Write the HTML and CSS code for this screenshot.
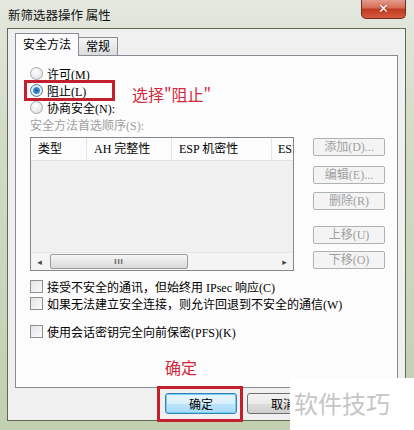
FILE: index.html
```html
<!DOCTYPE html>
<html lang="zh-CN">
<head>
    <meta charset="UTF-8">
    <title>新筛选器操作 属性</title>
    <link rel="stylesheet" href="styles.css">
</head>
<body>
    <div class="window">
        <div class="titlebar">
            <span class="title">新筛选器操作 属性</span>
            <span class="close-btn">✕</span>
        </div>
        <div class="client">
            <div class="tabs">
                <span class="tab active">安全方法</span>
                <span class="tab">常规</span>
            </div>
            <div class="panel">
                <div class="radio-row"><span class="radio"></span>许可(M)</div>
                <div class="radio-row"><span class="radio checked"></span>阻止(L)</div>
                <div class="radio-row"><span class="radio"></span>协商安全(N):</div>
                <div class="mark-box mark-radio"></div>
                <div class="note note-top">选择"阻止"</div>

                <div class="group-label">安全方法首选顺序(S):</div>
                <div class="list-row">
                    <div class="listview">
                        <div class="list-head">
                            <span class="col col-type">类型</span>
                            <span class="col col-ah">AH 完整性</span>
                            <span class="col col-esp">ESP 机密性</span>
                            <span class="col col-esi">ESI</span>
                        </div>
                        <div class="list-body"></div>
                        <div class="hscroll">
                            <span class="arrow">◂</span>
                            <span class="thumb">III</span>
                            <span class="track"></span>
                            <span class="arrow">▸</span>
                        </div>
                    </div>
                    <div class="side-buttons">
                        <span class="btn btn-add">添加(D)...</span>
                        <span class="btn btn-edit">编辑(E)...</span>
                        <span class="btn btn-del">删除(R)</span>
                        <span class="btn btn-up">上移(U)</span>
                        <span class="btn btn-down">下移(O)</span>
                    </div>
                </div>

                <div class="check-row first"><span class="checkbox"></span>接受不安全的通讯，但始终用 IPsec 响应(C)</div>
                <div class="check-row"><span class="checkbox"></span>如果无法建立安全连接，则允许回退到不安全的通信(W)</div>
                <div class="check-row pfs"><span class="checkbox"></span>使用会话密钥完全向前保密(PFS)(K)</div>

                <div class="note note-ok">确定</div>
            </div>
            <div class="footer">
                <span class="dlg-btn default">确定</span>
                <span class="dlg-btn">取消</span>
                <div class="mark-box mark-ok"></div>
            </div>
        </div>
        <div class="watermark">软件技巧</div>
    </div>
</body>
</html>
```

FILE: styles.css
```css
body {
    margin: 0;
    padding: 0;
    font-family: "Liberation Serif", "Noto Sans CJK SC", serif;
    font-size: 12px;
    color: #000;
    background: #c9d3bb;
}
.window {
    position: relative;
    width: 414px;
    height: 430px;
    overflow: hidden;
    background: linear-gradient(180deg, #e4e8df 0%, #d3dbc8 30%, #c2cfb0 100%);
}
.titlebar {
    height: 28px;
    display: flex;
    align-items: flex-start;
    padding-left: 8px;
}
.title {
    font-family: "Noto Sans CJK SC", sans-serif;
    font-size: 12.5px;
    line-height: 30px;
    color: #111;
}
.close-btn {
    margin-left: auto;
    margin-right: 8px;
    margin-top: -1px;
    width: 45px;
    height: 20px;
    box-sizing: border-box;
    border: 1px solid #6b3024;
    border-top: none;
    border-radius: 0 0 5px 5px;
    background: linear-gradient(180deg, #e6a394 0%, #d66e58 45%, #c23b22 55%, #d55a3e 100%);
    color: #fff;
    font-family: "DejaVu Sans", sans-serif;
    font-weight: bold;
    font-size: 13px;
    line-height: 19px;
    text-align: center;
    text-shadow: 0 0 2px #6b2010;
}
.client {
    position: relative;
    height: 393px;
    margin: 0 8px 0 7px;
    box-sizing: border-box;
    background: #f0f0f0;
    border: 1px solid #5c6b52;
    padding: 4px 7px 0 7px;
}
.tabs {
    display: flex;
    align-items: flex-end;
    height: 22px;
    position: relative;
    z-index: 2;
}
.tab {
    box-sizing: border-box;
    height: 18px;
    padding: 0 7px;
    border: 1px solid #898c95;
    border-bottom: none;
    border-left: none;
    background: linear-gradient(180deg, #f5f5f5, #dcdcdc);
    line-height: 18px;
    white-space: nowrap;
}
.tab.active {
    height: 23px;
    margin-bottom: -1px;
    padding: 0 7px;
    border-left: 1px solid #898c95;
    background: #fcfcfc;
    line-height: 22px;
}
.panel {
    position: relative;
    height: 333px;
    box-sizing: border-box;
    background: #fcfcfc;
    border: 1px solid #898c95;
    padding: 9px 0 0 14px;
}
.radio-row {
    display: flex;
    align-items: center;
    height: 17px;
}
.radio {
    width: 11px;
    height: 11px;
    border-radius: 50%;
    border: 1px solid #a3a9b0;
    background: radial-gradient(circle at 40% 35%, #ffffff, #d8dcdf);
    margin-right: 4px;
    box-sizing: content-box;
}
.radio.checked {
    background: radial-gradient(circle, #1d5f96 0, #3e8fd0 3px, #e9f2f9 4px, #d6dde3 6px);
    border-color: #5d7a96;
}
.mark-box {
    position: absolute;
    border: 3px solid #c41f2c;
    box-sizing: border-box;
}
.mark-radio {
    left: 8px;
    top: 24px;
    width: 91px;
    height: 21px;
}
.note {
    position: absolute;
    font-family: "Noto Sans CJK SC", sans-serif;
    font-size: 16px;
    color: #d3283c;
}
.note-top {
    left: 116px;
    top: 26px;
}
.note-ok {
    left: 149px;
    top: 299px;
}
.group-label {
    height: 17px;
    line-height: 17px;
    margin-top: 2px;
    color: #a0a0a0;
}
.list-row {
    display: flex;
    margin-top: 2px;
}
.listview {
    width: 264px;
    height: 134px;
    box-sizing: border-box;
    border: 1px solid #828790;
    background: #f0f0f0;
    display: flex;
    flex-direction: column;
    overflow: hidden;
}
.list-head {
    display: flex;
    height: 22px;
    background: #fcfcfc;
    border-bottom: 1px solid #e3e3e3;
    flex-shrink: 0;
}
.col {
    box-sizing: border-box;
    padding-left: 7px;
    line-height: 22px;
    border-right: 1px solid #e3e5e8;
    white-space: nowrap;
    overflow: hidden;
}
.col-type { width: 56px; }
.col-ah { width: 85px; }
.col-esp { width: 100px; }
.col-esi { flex: 1; border-right: none; padding-left: 6px; }
.list-body {
    flex: 1;
}
.hscroll {
    height: 17px;
    display: flex;
    align-items: center;
    background: #f4f4f4;
    border-top: 1px solid #e6e6e6;
}
.arrow {
    width: 17px;
    text-align: center;
    font-size: 9px;
    color: #4a4a4a;
    font-family: "DejaVu Sans", sans-serif;
}
.thumb {
    width: 138px;
    height: 15px;
    box-sizing: border-box;
    border: 1px solid #9c9c9c;
    border-radius: 2px;
    background: linear-gradient(180deg, #f6f6f6, #dadada);
    text-align: center;
    font-family: "Liberation Sans", sans-serif;
    font-size: 8px;
    font-weight: bold;
    letter-spacing: 1px;
    line-height: 13px;
    color: #5a5a5a;
    margin-left: 2px;
}
.track {
    flex: 1;
}
.side-buttons {
    display: flex;
    flex-direction: column;
    margin-left: 19px;
    padding-top: 1px;
}
.btn {
    width: 72px;
    height: 18px;
    box-sizing: border-box;
    border: 1px solid #adb2b5;
    border-radius: 2px;
    background: #f4f4f4;
    color: #a0a0a0;
    text-align: center;
    line-height: 16px;
}
.btn-edit { margin-top: 10px; }
.btn-del { margin-top: 8px; }
.btn-up { margin-top: 16px; }
.btn-down { margin-top: 7px; }
.check-row {
    display: flex;
    align-items: center;
    height: 17px;
}
.check-row.first { margin-top: 7px; }
.check-row.pfs { margin-top: 11px; }
.checkbox {
    width: 11px;
    height: 11px;
    border: 1px solid #8f8f8f;
    background: linear-gradient(135deg, #e4e4e4, #fbfbfb);
    margin-right: 4px;
    flex-shrink: 0;
}
.footer {
    position: relative;
    display: flex;
    padding: 5px 0 0 150px;
    gap: 10px;
}
.dlg-btn {
    width: 72px;
    height: 21px;
    box-sizing: border-box;
    border: 1px solid #707070;
    border-radius: 3px;
    background: linear-gradient(180deg, #f2f2f2 0%, #ebebeb 50%, #dddddd 51%, #cfcfcf 100%);
    font-family: "Noto Sans CJK SC", sans-serif;
    text-align: center;
    line-height: 19px;
}
.dlg-btn.default {
    border-color: #3c7fb1;
    background: linear-gradient(180deg, #eaf6fd 0%, #d9f0fc 50%, #bee6fd 51%, #a7d9f5 100%);
    box-shadow: inset 0 0 0 1px #6ed1f8;
}
.mark-ok {
    left: 142px;
    top: -2px;
    width: 86px;
    height: 36px;
}
.watermark {
    position: absolute;
    right: 0;
    bottom: 0;
    width: 124px;
    height: 52px;
    background: #fff;
    color: #c6c6c6;
    font-family: "Noto Sans CJK SC", sans-serif;
    font-size: 24px;
    line-height: 50px;
    padding-left: 4px;
    box-sizing: border-box;
}
```
